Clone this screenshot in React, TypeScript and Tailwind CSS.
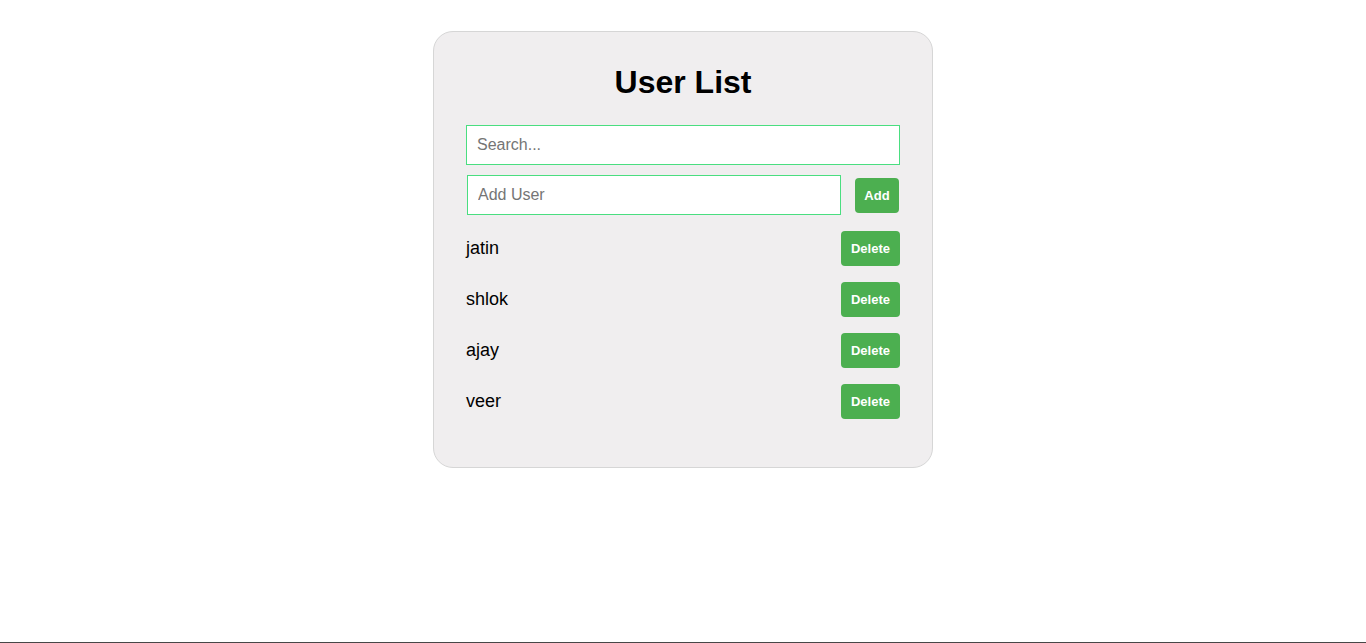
import React, { useState } from 'react'

const INITIAL_USERS = ['jatin', 'shlok', 'ajay', 'veer']

const App: React.FC = () => {
  const [users, setUsers] = useState<string[]>(INITIAL_USERS)
  const [search, setSearch] = useState('')
  const [newUser, setNewUser] = useState('')

  function addUser() {
    if (!newUser.trim()) return
    setUsers([...users, newUser.trim()])
    setNewUser('')
  }

  const filtered = users.filter(u => u.toLowerCase().includes(search.toLowerCase()))

  return (
    <div
      className="h-[643px] bg-white border-b border-[#474747] pt-[31px]"
      style={{ fontFamily: '"Liberation Sans", Arial, sans-serif' }}
    >
      <div className="mx-auto w-[500px] rounded-[20px] border border-[#d6d6d6] bg-[#f0eeef] px-8 pt-8 pb-12">
        {/* TITULO */}
        <h1 className="text-center text-[32px] font-bold leading-[37px] text-black mb-6">
          User List
        </h1>

        {/* BUSCA */}
        <input
          placeholder="Search..."
          value={search}
          onChange={e => setSearch(e.target.value)}
          className="block w-full h-10 border border-[#4ade80] bg-white px-[10px] text-base text-black placeholder:text-[#757575] outline-none"
        />

        {/* ADICIONAR */}
        <div className="mt-[10px] flex items-start gap-[14px]">
          <input
            placeholder="Add User"
            value={newUser}
            onChange={e => setNewUser(e.target.value)}
            className="ml-px h-10 w-[374px] border border-[#4ade80] bg-white px-[10px] text-base text-black placeholder:text-[#757575] outline-none"
          />
          <button
            onClick={addUser}
            className="mt-[3px] h-[35px] w-[44px] rounded-[4px] bg-[#4caf50] text-[13px] font-bold text-white"
          >
            Add
          </button>
        </div>

        {/* LISTA */}
        <ul className="mt-[16px] flex flex-col gap-4">
          {filtered.map(user => (
            <li key={user} className="flex h-[35px] items-center justify-between">
              <span className="text-[18px] text-black">{user}</span>
              <button
                onClick={() => setUsers(users.filter(u => u !== user))}
                className="h-[35px] w-[59px] rounded-[4px] bg-[#4caf50] text-[13px] font-bold text-white"
              >
                Delete
              </button>
            </li>
          ))}
        </ul>
      </div>
    </div>
  )
}

export default App
